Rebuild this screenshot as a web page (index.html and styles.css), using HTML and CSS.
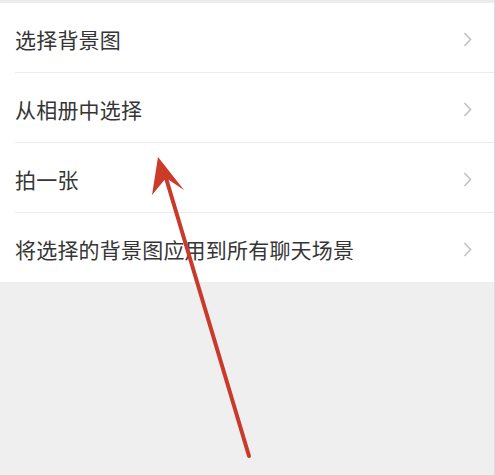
FILE: index.html
```html
<!DOCTYPE html>
<html lang="zh">
<head>
<meta charset="utf-8">
<link rel="stylesheet" href="styles.css">
</head>
<body>
<div class="page">
  <div class="topstrip"></div>
  <ul class="list">
    <li class="row"><span class="label">选择背景图</span><svg class="chev" viewBox="0 0 8 15"><path d="M1 1 L7 7.5 L1 14" /></svg></li>
    <li class="row"><span class="label">从相册中选择</span><svg class="chev" viewBox="0 0 8 15"><path d="M1 1 L7 7.5 L1 14" /></svg></li>
    <li class="row"><span class="label">拍一张</span><svg class="chev" viewBox="0 0 8 15"><path d="M1 1 L7 7.5 L1 14" /></svg></li>
    <li class="row"><span class="label">将选择的背景图应用到所有聊天场景</span><svg class="chev" viewBox="0 0 8 15"><path d="M1 1 L7 7.5 L1 14" /></svg></li>
  </ul>
  <svg class="arrow" viewBox="0 0 495 475">
    <line x1="249" y1="456" x2="166" y2="178" />
    <polygon points="158,157 152,195 166,178 184,190" />
  </svg>
</div>
</body>
</html>
```
FILE: styles.css
```css
html, body {
  margin: 0;
  padding: 0;
  background: #efefef;
}
.page {
  position: relative;
  width: 494px;
  height: 475px;
  border-right: 1px solid #dcdcdc;
  background: #efefef;
  overflow: hidden;
}
.topstrip {
  height: 3px;
  background: #ececec;
}
.list {
  list-style: none;
  margin: 0;
  padding: 0;
  background: #ffffff;
}
.row {
  height: 69px;
  display: flex;
  align-items: center;
  justify-content: space-between;
  padding: 3px 22px 0 15px;
  box-sizing: border-box;
  position: relative;
}
.row + .row {
  height: 70px;
  border-top: 1px solid #ebebeb;
  margin-left: 15px;
  padding-left: 0;
}
.label {
  font-family: "Noto Sans CJK SC", "Noto Sans", sans-serif;
  font-size: 21px;
  color: #353535;
  letter-spacing: 0.2px;
}
.chev {
  width: 9px;
  height: 15px;
  fill: none;
  stroke: #c2c2c2;
  stroke-width: 1.6;
}
.arrow {
  position: absolute;
  left: 0;
  top: 0;
  width: 495px;
  height: 475px;
  pointer-events: none;
}
.arrow line {
  stroke: #c93a2c;
  stroke-width: 4;
  stroke-linecap: round;
}
.arrow polygon {
  fill: #cc3a2a;
}
```
